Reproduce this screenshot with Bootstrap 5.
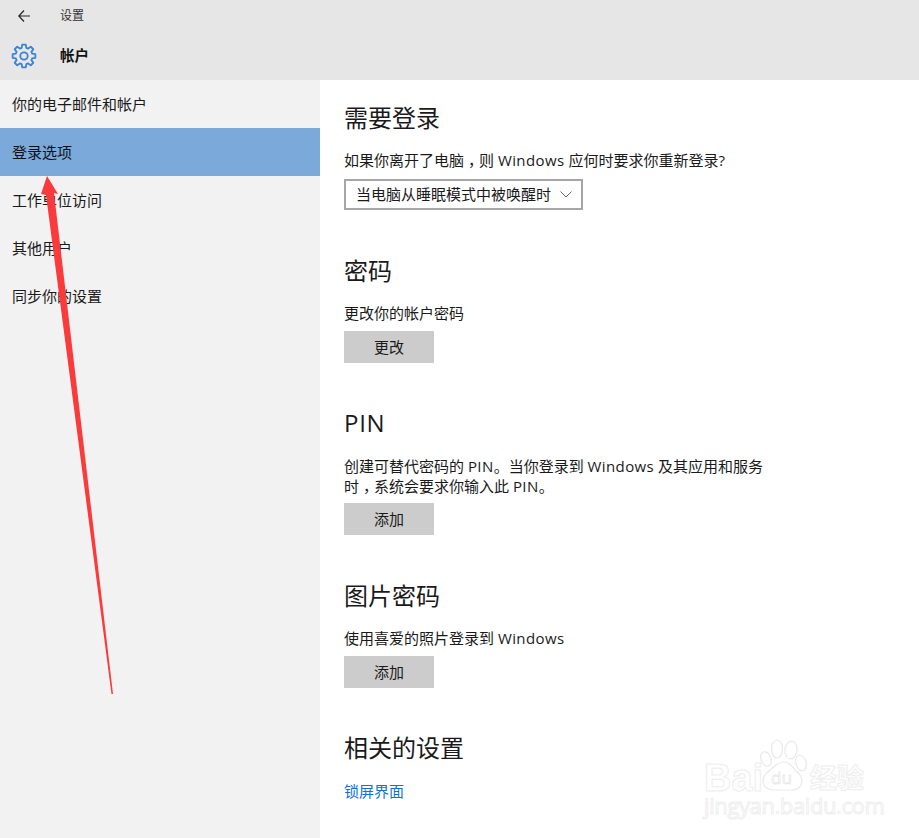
<!DOCTYPE html>
<html lang="zh-CN">
<head>
<meta charset="utf-8">
<title>设置</title>
<link href="https://cdn.jsdelivr.net/npm/bootstrap@5.3.0/dist/css/bootstrap.min.css" rel="stylesheet">
<style>
html,body{height:100%}
body{font-family:"Open Sans","Noto Sans CJK SC",sans-serif;font-size:15px;color:#1a1a1a;background:#fff;overflow:hidden;position:relative;width:919px;height:838px}
.win-head{background:#e6e6e6;height:80px}
.head-top{height:32px;padding-left:18px}
.head-title{font-size:12px;margin-left:30px;color:#333}
.head-sub{height:48px;padding-left:12px}
.head-name{font-size:14.5px;font-weight:700;margin-left:24px;color:#111}
.side-pane{width:320px;height:758px;background:#f2f2f2;flex:none}
.side-pane .list-group-item{background:transparent;border:0;border-radius:0;height:48px;margin:0;padding:14px 12px 0;line-height:20px;font-size:15px;color:#1a1a1a}
.side-pane .list-group-item.active{background:#7aa9da;color:#111;margin-top:0}
.main-pane{padding:22px 0 0 24px;width:599px}
.sec-h{font-size:24px;line-height:32px;font-weight:400;margin:0 0 16px;color:#1a1a1a}
.sec-h.sec-last,.sec-pin .sec-h{margin-bottom:17px}
.sec-h .lat{letter-spacing:.7px}
.lat{letter-spacing:.4px}
.cm{display:inline-block;transform:translateX(4px)}
.sec-t{line-height:20px;margin:0;width:430px}
.sec-block{margin-bottom:44px}
.sec-block.sec-wide{margin-bottom:45px}
.sel-box{width:239px;height:31px;border:2px solid #a6a6a6;margin-top:9px;padding:0 9px 0 10px;background:#fff}
.btn.act-btn{display:block;background:#ccc;border:0;border-radius:0;width:90px;height:32px;padding:0;margin-top:8px;font-size:15px;color:#1a1a1a}
.sec-pin .btn.act-btn{margin-top:7px}
.rel-link{color:#1272d3;text-decoration:none;display:block;line-height:20px}
.arrow-over{position:absolute;left:0;top:0;pointer-events:none}
.gear-ic{overflow:visible}
.wm{position:absolute;left:700px;top:738px;width:170px;height:90px;pointer-events:none}
.wm-txt{position:absolute;color:#fff;-webkit-text-stroke:1px #eeeeee;white-space:nowrap;line-height:1}
.wm-bai{left:4px;top:21px;font:700 38px/1 "Liberation Sans",sans-serif}
.wm-jy{left:110px;top:25px;font:700 27px/1 "Noto Sans CJK SC",sans-serif}
.wm-url{left:4px;top:55px;font:400 22px/1.1 "Open Sans",sans-serif;letter-spacing:-.4px}
.wm-paw{position:absolute;left:60px;top:2px;overflow:visible}
</style>
</head>
<body>
<header class="win-head">
  <div class="head-top d-flex align-items-center">
    <svg width="12" height="12" viewBox="0 0 12 12" fill="none" stroke="#222" stroke-width="1.200"><path d="M12 6H1M6 .5.800 6 6 11.500"/></svg>
    <span class="head-title">设置</span>
  </div>
  <div class="head-sub d-flex align-items-center">
    <svg class="gear-ic" width="24" height="24" viewBox="0 0 24 24" fill="none" stroke="#3a83d2" stroke-width="1.800" stroke-linejoin="round"><path d="M9.660 3.830 10.200.64H13.800L14.340 3.830 16.120 4.570 18.760 2.700 21.300 5.240 19.430 7.880 20.170 9.660 23.360 10.200V13.800L20.170 14.340 19.430 16.120 21.300 18.760 18.760 21.300 16.120 19.430 14.340 20.170 13.800 23.360H10.200L9.660 20.170 7.880 19.430 5.240 21.300 2.700 18.760 4.570 16.120 3.830 14.340 .64 13.800V10.200L3.830 9.660 4.570 7.880 2.700 5.240 5.240 2.700 7.880 4.570Z"/><circle cx="12" cy="12" r="3.700"/></svg>
    <span class="head-name">帐户</span>
  </div>
</header>
<div class="d-flex">
  <nav class="side-pane list-group list-group-flush">
    <a class="list-group-item" href="#">你的电子邮件和帐户</a>
    <a class="list-group-item active" href="#">登录选项</a>
    <a class="list-group-item" href="#">工作单位访问</a>
    <a class="list-group-item" href="#">其他用户</a>
    <a class="list-group-item" href="#">同步你的设置</a>
  </nav>
  <main class="main-pane">
    <section class="sec-block sec-wide">
      <h2 class="sec-h">需要登录</h2>
      <p class="sec-t text-nowrap">如果你离开了电脑<span class="cm">，</span>则 <span class="lat">Windows</span> 应何时要求你重新登录<span class="lat">?</span></p>
      <div class="sel-box d-flex align-items-center justify-content-between">
        <span>当电脑从睡眠模式中被唤醒时</span>
        <svg width="12" height="7" viewBox="0 0 12 7" fill="none" stroke="#666"><path d="M.5.500 6 6 11.500.500"/></svg>
      </div>
    </section>
    <section class="sec-block">
      <h2 class="sec-h">密码</h2>
      <p class="sec-t">更改你的帐户密码</p>
      <button class="btn act-btn" type="button">更改</button>
    </section>
    <section class="sec-block sec-wide sec-pin">
      <h2 class="sec-h"><span class="lat">PIN</span></h2>
      <p class="sec-t">创建可替代密码的 <span class="lat">PIN</span>。当你登录到 <span class="lat">Windows</span> 及其应用和服务时<span class="cm">，</span>系统会要求你输入此 <span class="lat">PIN</span>。</p>
      <button class="btn act-btn" type="button">添加</button>
    </section>
    <section class="sec-block">
      <h2 class="sec-h">图片密码</h2>
      <p class="sec-t">使用喜爱的照片登录到 <span class="lat">Windows</span></p>
      <button class="btn act-btn" type="button">添加</button>
    </section>
    <section>
      <h2 class="sec-h sec-last">相关的设置</h2>
      <a class="rel-link" href="#">锁屏界面</a>
    </section>
  </main>
</div>
<svg class="arrow-over" width="919" height="838" viewBox="0 0 919 838"><polygon points="47,176 58,194 54,193 113,694 111.500,694 46,195 41,194" fill="#fb3a3c"/></svg>
<div class="wm">
  <span class="wm-txt wm-bai">Bai</span>
  <svg class="wm-paw" width="48" height="52" viewBox="0 0 48 52" fill="#fff" stroke="#e9e9e9" stroke-width="1.200"><ellipse cx="6" cy="19" rx="5" ry="7.500" transform="rotate(-20 6 19)"/><ellipse cx="17" cy="9" rx="5.500" ry="9"/><ellipse cx="31" cy="10" rx="6" ry="9" transform="rotate(8 31 10)"/><ellipse cx="41" cy="23" rx="5" ry="8" transform="rotate(-15 41 23)"/><path d="M24 22c5 0 8 4 11 8 4 3 7 6 7 11 0 6-5 9-10 9H14C8 50 3 47 3 41c0-5 3-8 7-11 4-3 7-8 14-8z"/><text x="11" y="44" font-family="Open Sans" font-size="17" stroke-width=".8">du</text></svg>
  <span class="wm-txt wm-jy">经验</span>
  <span class="wm-txt wm-url">jingyan.baidu.com</span>
</div>
<script src="https://cdn.jsdelivr.net/npm/bootstrap@5.3.0/dist/js/bootstrap.bundle.min.js"></script>
</body>
</html>
